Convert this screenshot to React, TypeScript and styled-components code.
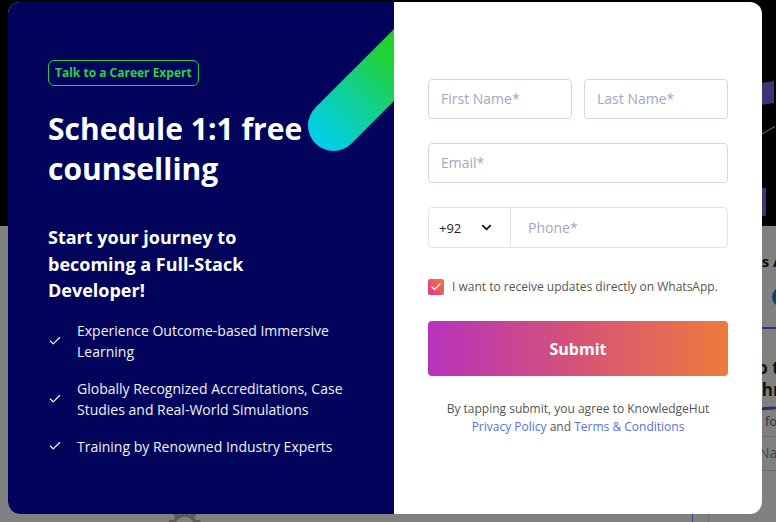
import React from 'react';
import styled, {createGlobalStyle} from 'styled-components';
import {Check, ChevronDown} from 'lucide-react';

const GlobalStyle = createGlobalStyle`
    html, body {
        margin: 0;
        padding: 0;
        background: #808080;
        font-family: 'Open Sans', 'Noto Sans', sans-serif;
    }
    * {
        box-sizing: border-box;
    }
`;

const perks = [
    'Experience Outcome-based Immersive Learning',
    'Globally Recognized Accreditations, Case Studies and Real-World Simulations',
    'Training by Renowned Industry Experts',
];

const App = () => {
    return (
        <>
            <GlobalStyle/>
            <Page>
                <Hero>
                    <HeroShape top={82} height={22} width={12}/>
                    <HeroLine/>
                    <HeroShape top={188} height={28} width={4}/>
                </Hero>
                <Content>
                    <Gear>⚙</Gear>
                    <Divider/>
                    <Sidebar>
                        <SideTitle>Days Ahead</SideTitle>
                        <Avatar/>
                        <SideRule/>
                        <SideHeading $top={28} $indent={36}>Go to</SideHeading>
                        <SideHeading $top={0} $indent={43}>Thrive</SideHeading>
                        <Swoosh/>
                        <SideText>Join for free</SideText>
                        <SideRow>Name</SideRow>
                    </Sidebar>
                </Content>

                <Modal>
                    <LeftPanel>
                        <Pill/>
                        <Badge>Talk to a Career Expert</Badge>
                        <Title>Schedule 1:1 free counselling</Title>
                        <Subtitle>Start your journey to becoming a Full-Stack Developer!</Subtitle>
                        <PerkList>
                            {perks.map((perk) => (
                                <Perk key={perk}>
                                    <Check
                                        size={14}
                                        strokeWidth={2}
                                        color='#ffffff'
                                    />
                                    <span>{perk}</span>
                                </Perk>
                            ))}
                        </PerkList>
                    </LeftPanel>

                    <RightPanel>
                        <Form onSubmit={(e) => e.preventDefault()}>
                            <Row>
                                <Input placeholder='First Name*'/>
                                <Input placeholder='Last Name*'/>
                            </Row>
                            <Input placeholder='Email*'/>
                            <PhoneField>
                                <CountryCode type='button'>
                                    <span>+92</span>
                                    <ChevronDown
                                        size={15}
                                        strokeWidth={3}
                                        color='#1c1c2a'
                                    />
                                </CountryCode>
                                <PhoneInput placeholder='Phone*'/>
                            </PhoneField>
                            <Consent>
                                <CheckBox>
                                    <Check
                                        size={12}
                                        strokeWidth={2.5}
                                        color='#ffffff'
                                    />
                                </CheckBox>
                                <span>I want to receive updates directly on WhatsApp.</span>
                            </Consent>
                            <SubmitButton type='submit'>Submit</SubmitButton>
                            <Terms>
                                By tapping submit, you agree to KnowledgeHut
                                <br/>
                                <Link href='#'>Privacy Policy</Link> and <Link href='#'>Terms &amp; Conditions</Link>
                            </Terms>
                        </Form>
                    </RightPanel>
                </Modal>
            </Page>
        </>
    );
};

const Page = styled.div`
    position: relative;
    width: 776px;
    height: 522px;
    overflow: hidden;
    background: #808080;
`;

const Hero = styled.div`
    position: relative;
    height: 226px;
    background: #000000;
`;

const HeroShape = styled.div<{top: number, height: number, width: number}>`
    position: absolute;
    right: ${(props) => 14 - props.width}px;
    top: ${(props) => props.top}px;
    width: ${(props) => props.width + 2}px;
    height: ${(props) => props.height}px;
    background: #3b3475;
    transform: skewY(-8deg);
`;

const HeroLine = styled.div`
    position: absolute;
    right: 0;
    top: 130px;
    width: 16px;
    height: 1px;
    background: #6d6d6d;
    transform: rotate(-30deg);
`;

const Content = styled.div`
    display: flex;
    height: 296px;
`;

const Gear = styled.div`
    margin: 276px 0 0 164px;
    font-size: 46px;
    line-height: 1;
    color: #5a5a5a;
`;

const Divider = styled.div`
    margin-left: auto;
    margin-right: 15px;
    width: 1px;
    background: #3a3f8a;
`;

const Sidebar = styled.div`
    width: 68px;
    flex-shrink: 0;
    padding-top: 25px;
    border-left: 1px solid #6d6d6d;
    color: #111111;
    overflow: hidden;
    white-space: nowrap;
`;

const SideTitle = styled.div`
    padding-left: 24px;
    font-size: 15px;
    font-weight: 700;
    line-height: 20px;
`;

const Avatar = styled.div`
    width: 20px;
    height: 20px;
    border-radius: 50%;
    background: #0b4260;
    margin: 16px 0 0 63px;
`;

const SideRule = styled.div`
    height: 2px;
    background: #2c3480;
    margin-top: 20px;
`;

const SideHeading = styled.div<{$top: number, $indent: number}>`
    margin-top: ${(props) => props.$top}px;
    padding-left: ${(props) => props.$indent}px;
    font-size: 17px;
    font-weight: 700;
    line-height: 22px;
`;

const Swoosh = styled.div`
    height: 3px;
    margin: 6px 0 0 48px;
    border-radius: 2px;
    background: #2e2c6e;
    transform: rotate(-4deg);
`;

const SideText = styled.div`
    padding-left: 30px;
    margin-top: 2px;
    font-size: 13px;
    color: #333333;
`;

const SideRow = styled.div`
    margin-top: 6px;
    padding: 6px 0 8px 50px;
    border-top: 1px solid #6d6d6d;
    border-bottom: 1px solid #6d6d6d;
    font-size: 14px;
    color: #444444;
`;

const Modal = styled.div`
    position: absolute;
    top: 2px;
    left: 8px;
    width: 754px;
    height: 512px;
    display: flex;
    border-radius: 12px;
    overflow: hidden;
    background: #ffffff;
`;

const LeftPanel = styled.div`
    position: relative;
    width: 386px;
    flex-shrink: 0;
    padding: 58px 40px 0;
    background: #01045a;
    color: #ffffff;
    overflow: hidden;
`;

const Pill = styled.div`
    position: absolute;
    left: 300px;
    top: 98px;
    width: 160px;
    height: 51px;
    border-radius: 26px;
    background: linear-gradient(90deg, #00cdf0 0%, #12d08f 40%, #22d130 72%, #26d024 100%);
    transform-origin: 25.5px 25.5px;
    transform: rotate(-45deg);
`;

const Badge = styled.div`
    display: inline-block;
    padding: 4px 6px;
    border: 1px solid #22c94a;
    border-radius: 6px;
    font-size: 12px;
    font-weight: 700;
    line-height: 16px;
    color: #2bd04c;
`;

const Title = styled.h1`
    margin: 23px 0 0;
    max-width: 280px;
    font-size: 30px;
    font-weight: 700;
    line-height: 40px;
    color: #ffffff;
`;

const Subtitle = styled.h2`
    margin: 35px 0 0;
    max-width: 240px;
    font-size: 18px;
    font-weight: 700;
    line-height: 26.5px;
    color: #ffffff;
`;

const PerkList = styled.ul`
    list-style: none;
    margin: 16px 0 0;
    padding: 0;
    display: flex;
    flex-direction: column;
    gap: 16px;
`;

const Perk = styled.li`
    display: flex;
    align-items: center;
    gap: 15px;
    font-size: 14px;
    line-height: 21px;
    color: #f1f1f6;

    & > svg {
        flex-shrink: 0;
    }
`;

const RightPanel = styled.div`
    flex: 1;
    padding: 77px 34px 0;
`;

const Form = styled.form`
    display: flex;
    flex-direction: column;
    gap: 24px;
`;

const Row = styled.div`
    display: grid;
    grid-template-columns: 1fr 1fr;
    gap: 12px;
`;

const Input = styled.input`
    width: 100%;
    height: 40px;
    padding: 0 12px 2px;
    border: 1px solid #d6d6e0;
    border-radius: 4px;
    font-family: 'Open Sans', sans-serif;
    font-size: 14px;
    color: #222222;
    outline: none;

    &::placeholder {
        color: #a3a7bb;
    }
`;

const PhoneField = styled.div`
    display: flex;
    height: 41px;
    border: 1px solid #e3e3ea;
    border-radius: 4px;
`;

const CountryCode = styled.button`
    display: flex;
    align-items: center;
    justify-content: space-between;
    width: 82px;
    padding: 0 16px 0 10px;
    border: none;
    border-right: 1px solid #e3e3ea;
    background: transparent;
    font-family: 'Open Sans', sans-serif;
    font-size: 13px;
    color: #222222;
`;

const PhoneInput = styled.input`
    flex: 1;
    min-width: 0;
    padding: 0 17px;
    border: none;
    background: transparent;
    font-family: 'Open Sans', sans-serif;
    font-size: 14px;
    outline: none;

    &::placeholder {
        color: #a3a7bb;
    }
`;

const Consent = styled.label`
    display: flex;
    align-items: center;
    gap: 8px;
    margin-top: 6px;
    font-size: 12px;
    color: #555555;
`;

const CheckBox = styled.span`
    display: flex;
    align-items: center;
    justify-content: center;
    width: 16px;
    height: 16px;
    border-radius: 2px;
    background: linear-gradient(45deg, #e2319a 0%, #ee5a5a 55%, #f47a3a 100%);
`;

const SubmitButton = styled.button`
    height: 55px;
    margin-top: 2px;
    border: none;
    border-radius: 4px;
    background: linear-gradient(90deg, #b832be 0%, #d2507b 45%, #e2665c 75%, #ee7b3a 100%);
    font-family: 'Open Sans', sans-serif;
    font-size: 16px;
    font-weight: 700;
    color: #ffffff;
    cursor: pointer;
`;

const Terms = styled.p`
    margin: 0;
    text-align: center;
    font-size: 12px;
    line-height: 18px;
    color: #555555;
`;

const Link = styled.a`
    color: #5470e4;
    text-decoration: none;
`;

export default App;
